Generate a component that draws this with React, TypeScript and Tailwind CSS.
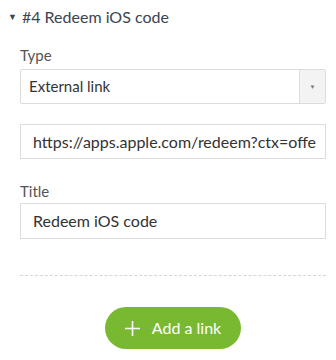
import React from "react";

export default function App() {
  return (
    <div
      className="w-[336px] h-[360px] bg-white overflow-hidden"
      style={{ fontFamily: "Lato, 'Open Sans', sans-serif" }}
    >
      <div className="flex items-center pl-[8px] pt-[6px] h-[28px] text-[16px] text-[#3b4450]">
        <span className="text-[9px] mr-[5px] text-[#3b4450]">▼</span>
        <span>#4 Redeem iOS code</span>
      </div>

      <div className="pl-[20px] pr-[10px]">
        <div className="mt-[18px] h-[18px] flex items-center text-[15px] text-[#555]">Type</div>
        <div className="mt-[5px] flex h-[35px] border border-[#dcdcdc] rounded-[2px]">
          <div className="flex-1 flex items-center px-[8px] text-[15px] text-[#333]">
            External link
          </div>
          <div className="w-[26px] flex items-center justify-center bg-[#f3f3f3] border-l border-[#dcdcdc]">
            <span className="text-[6px] text-[#777]">▼</span>
          </div>
        </div>

        <div className="mt-[20px] h-[35px] flex items-center px-[12px] border border-[#dcdcdc] text-[16px] text-[#333] overflow-hidden whitespace-nowrap">
          https://apps.apple.com/redeem?ctx=offe
        </div>

        <div className="mt-[23px] h-[18px] flex items-center text-[15px] text-[#555]">Title</div>
        <div className="mt-[3px] h-[36px] flex items-center px-[12px] border border-[#dcdcdc] text-[16px] text-[#333]">
          Redeem iOS code
        </div>

        <div className="mt-[36px] border-t border-dashed border-[#d5d5d5]" />

        <div className="mt-[31px] flex justify-center">
          <button className="h-[42px] w-[136px] rounded-full bg-[#79b931] text-white text-[16px] flex items-center justify-center gap-[12px]">
            <svg width="15" height="15" viewBox="0 0 15 15">
              <path d="M7.5 0v15M0 7.5h15" stroke="white" strokeWidth="1.6" />
            </svg>
            <span>Add a link</span>
          </button>
        </div>
      </div>
    </div>
  );
}
